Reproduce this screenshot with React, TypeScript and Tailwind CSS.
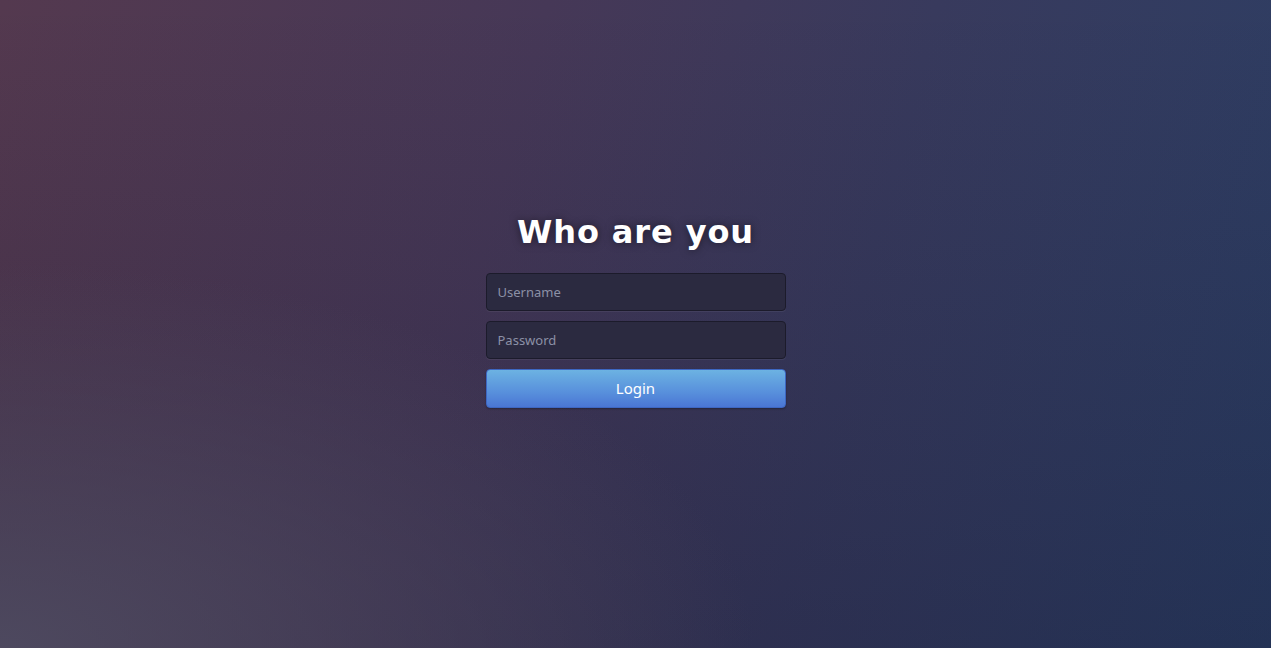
import React from "react";

const App = () => {
  return (
    <div className="min-h-screen w-full flex items-start justify-center bg-[#3a3552] bg-[radial-gradient(ellipse_at_0%_100%,rgba(78,74,96,0.95)_0%,rgba(78,74,96,0)_42%),linear-gradient(180deg,rgba(10,14,40,0)_0%,rgba(10,14,40,0.25)_100%),linear-gradient(105deg,#54394f_0%,#463857_38%,#383a5d_65%,#2c3e64_100%)]">
      <div className="mt-[212px] w-[300px] flex flex-col items-center">
        <h1 className="text-[32px] leading-[40px] font-bold tracking-[0.9px] text-white font-['DejaVu_Sans',sans-serif] [text-shadow:0_0_8px_rgba(0,0,0,0.5)]">
          Who are you
        </h1>
        <form className="mt-[21px] w-full flex flex-col gap-[10px]">
          <input
            type="text"
            placeholder="Username"
            className="h-[38px] w-full rounded-[4px] border border-[#1c1b2b] bg-[#2b2a40] px-[11px] text-[13px] text-white placeholder:text-[#8c90a6] font-['Noto_Sans',sans-serif] outline-none shadow-[0_1px_0_rgba(255,255,255,0.06)]"
          />
          <input
            type="password"
            placeholder="Password"
            className="h-[38px] w-full rounded-[4px] border border-[#1c1b2b] bg-[#2b2a40] px-[11px] text-[13px] text-white placeholder:text-[#8c90a6] font-['Noto_Sans',sans-serif] outline-none shadow-[0_1px_0_rgba(255,255,255,0.06)]"
          />
          <button
            type="button"
            className="h-[39px] w-full rounded-[4px] border border-[#3d67c2] bg-[linear-gradient(180deg,#6cb2e2_0%,#5890dc_60%,#4a76d4_100%)] text-[15px] text-white font-['Noto_Sans',sans-serif] shadow-[0_1px_2px_rgba(0,0,0,0.3)]"
          >
            Login
          </button>
        </form>
      </div>
    </div>
  );
};

export default App;
